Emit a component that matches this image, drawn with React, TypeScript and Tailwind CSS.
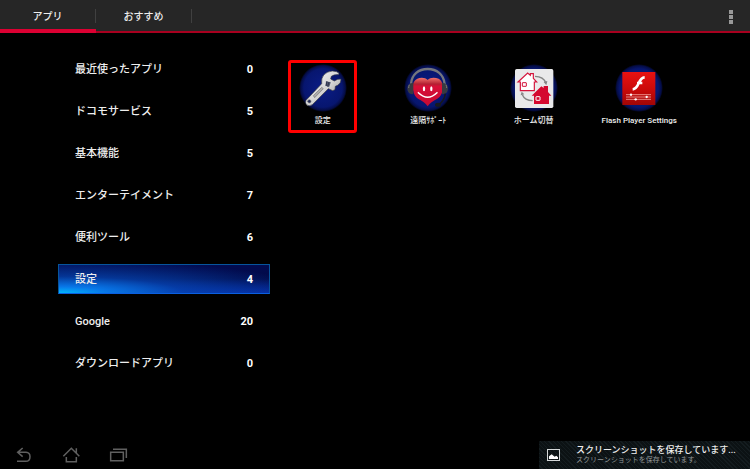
import { useState } from "react";

const categories = [
  { name: "最近使ったアプリ", count: 0 },
  { name: "ドコモサービス", count: 5 },
  { name: "基本機能", count: 5 },
  { name: "エンターテイメント", count: 7 },
  { name: "便利ツール", count: 6 },
  { name: "設定", count: 4 },
  { name: "Google", count: 20 },
  { name: "ダウンロードアプリ", count: 0 },
];

// blue disc behind every app icon
const Glow = ({ id, cx }: { id: string; cx: number }) => (
  <>
    <radialGradient id={id}>
      <stop offset="0" stopColor="#0a1c86" />
      <stop offset="0.8" stopColor="#07166f" />
      <stop offset="0.93" stopColor="#040c46" />
      <stop offset="1" stopColor="#000" />
    </radialGradient>
    <circle cx={cx} cy="99" r="72" fill={`url(#${id})`} />
  </>
);

const WrenchIcon = () => (
  <svg viewBox="54 27 144 144" className="size-12" aria-hidden="true">
    <Glow id="glow-wrench" cx={126} />
    <linearGradient id="steel" x1="0" y1="0" x2="1" y2="1">
      <stop offset="0" stopColor="#ffffff" />
      <stop offset="0.55" stopColor="#d2d2d2" />
      <stop offset="1" stopColor="#8c8c8c" />
    </linearGradient>
    <path
      d="M75 136 L122 86 Q120 70 128 60 Q138 49 154 48 Q168 48 174 55 L173 59 Q158 58 151 64 L149 72 L160 78 L170 73 L180 72 Q181 84 170 91 L163 94 L162 104 L155 107 L142 101 L94 149 Q84 156 76 149 Q71 143 75 136Z"
      fill="url(#steel)"
      stroke="#34363f"
      strokeWidth="2"
    />
    <path d="M134 77 l17 4 -6 17 -13 -5z" fill="#50566a" stroke="#eee" strokeWidth="2" />
    <path d="M138 79 l-3 14 M144 81 l-4 14" stroke="#1d2440" strokeWidth="2" />
    <path d="M97 122 L122 97 L127 101 L101 128Z" fill="#aaa" stroke="#777" strokeWidth="2" />
    <circle cx="85" cy="139" r="5" fill="#1b2454" stroke="#777" strokeWidth="2" />
  </svg>
);

const SupportIcon = () => (
  <svg viewBox="42 27 144 144" className="size-12" aria-hidden="true">
    <Glow id="glow-heart" cx={114} />
    <linearGradient id="heart" x1="0" y1="0" x2="0" y2="1">
      <stop offset="0" stopColor="#f0716b" />
      <stop offset="0.22" stopColor="#b32032" />
      <stop offset="0.3" stopColor="#d80f37" />
      <stop offset="1" stopColor="#c40a33" />
    </linearGradient>
    <path d="M63 87 C65 58 86 42 113 42 C140 42 161 58 164 87" fill="none" stroke="#74767d" strokeWidth="7" />
    <path
      d="M113 75 C106 67 92 67 82 71 C68 77 66 95 70 108 Q72 123 84 131 C95 137 107 144 113 154 C119 144 131 137 142 131 Q155 123 157 108 C161 95 158 77 146 71 C134 67 120 67 113 75Z"
      fill="url(#heart)"
    />
    <path d="M70 84 Q52 84 52 101 Q53 118 70 118Z" fill="#383a41" />
    <path d="M156 84 Q174 84 174 101 Q173 118 156 118Z" fill="#383a41" />
    <path d="M58 89 Q56 94 56 99 M168 89 Q170 94 170 99" stroke="#777" strokeWidth="3" fill="none" />
    <path d="M166 116 Q163 138 147 148" fill="none" stroke="#18191d" strokeWidth="5" />
    <ellipse cx="144" cy="149" rx="9" ry="6" fill="#191a1e" />
    <ellipse cx="102" cy="101" rx="3.5" ry="7.5" fill="#fff" />
    <ellipse cx="124" cy="101" rx="3.5" ry="7.5" fill="#fff" />
    <path d="M85 113 Q113 140 141 113" fill="none" stroke="#fff" strokeWidth="4.5" strokeLinecap="round" />
  </svg>
);

const HomeSwitchIcon = () => (
  <svg viewBox="42 27 144 144" className="size-12" aria-hidden="true">
    <Glow id="glow-home" cx={114} />
    <rect x="57" y="42" width="115" height="117" rx="5" fill="#e9e9ea" />
    <path d="M73 107 V81 H66 L95 54 L103 61 V56 H112 V70 L122 81 H115 V107Z" fill="#fff" stroke="#d4143c" strokeWidth="3.5" />
    <rect x="79" y="83" width="12" height="11" rx="1" fill="#fff" stroke="#d4143c" strokeWidth="3" />
    <path d="M114 147 V122 H107 L136 94 L143 99 V93 H156 V111 L166 122 H159 V147Z" fill="#d4082f" />
    <rect x="120" y="125" width="12" height="11" rx="1" fill="#d4082f" stroke="#fff" strokeWidth="3" />
    <path d="M117 64 Q143 65 149 83" fill="none" stroke="#858585" strokeWidth="4" />
    <path d="M143 81 L154 78 L151 91Z" fill="#858585" />
    <path d="M110 137 Q86 136 79 119" fill="none" stroke="#858585" strokeWidth="4" />
    <path d="M74 121 L77 110 L85 118Z" fill="#858585" />
  </svg>
);

const FlashIcon = () => (
  <svg viewBox="75 27 144 144" className="size-12" aria-hidden="true">
    <Glow id="glow-flash" cx={147} />
    <linearGradient id="flash" x1="0" y1="0" x2="0" y2="1">
      <stop offset="0" stopColor="#e81212" />
      <stop offset="0.5" stopColor="#cc0a0a" />
      <stop offset="1" stopColor="#a00606" />
    </linearGradient>
    <rect x="97" y="51" width="99" height="99" fill="url(#flash)" />
    <path d="M164 67 C143 68 149 102 128 103 M141 84 H157" fill="none" stroke="#fff" strokeWidth="8" />
    <path d="M108 119 H183 M108 126 H183 M108 133 H183" stroke="#f3a09b" strokeWidth="2.5" />
    <circle cx="123" cy="119" r="3.5" fill="#fff" />
    <circle cx="170" cy="126" r="3.5" fill="#fff" />
    <circle cx="137" cy="133" r="3.5" fill="#fff" />
  </svg>
);

const apps = [
  { name: "設定", icon: <WrenchIcon />, marked: true },
  { name: "遠隔ｻﾎﾟｰﾄ", icon: <SupportIcon /> },
  { name: "ホーム切替", icon: <HomeSwitchIcon /> },
  { name: "Flash Player Settings", icon: <FlashIcon /> },
];

const Header = () => {
  const [tab, setTab] = useState("アプリ");

  return (
    <header className="flex h-[33px] justify-between border-b-2 border-[#a8001f] bg-[#262626]">
      <nav className="flex">
        {["アプリ", "おすすめ"].map((name) => (
          <button
            key={name}
            className={`-mb-[2px] flex w-24 items-center border-b-4 pt-[3px] text-[10px] font-medium ${
              tab == name ? "border-[#dc0032]" : "border-transparent"
            }`}
            onClick={() => setTab(name)}
          >
            <span className="flex h-[14px] flex-1 items-center justify-center border-r border-[#404040]">
              {name}
            </span>
          </button>
        ))}
      </nav>
      <button aria-label="メニュー" className="flex w-[38px] flex-col items-center justify-center gap-px pt-[3px]">
        <i className="size-1 bg-[#989898]"></i>
        <i className="size-1 bg-[#989898]"></i>
        <i className="size-1 bg-[#989898]"></i>
      </button>
    </header>
  );
};

const Sidebar = () => {
  const [selected, setSelected] = useState("設定");

  return (
    <ul className="flex w-[270px] shrink-0 flex-col gap-3 pt-[21px] pl-[58px]">
      {categories.map(({ name, count }) => (
        <li key={name}>
          <button
            className={`flex h-[30px] w-full items-center justify-between border px-4 pt-[2px] text-[11px] ${
              selected == name
                ? "border-[#06549c] border-b-[#0a5fe0] bg-[radial-gradient(ellipse_at_bottom_left,#00b8ff_0%,#0877e8_16%,#0649b8b0_42%,transparent_85%),linear-gradient(to_bottom,#020b50_0%,#020a48_50%,#0528a0_100%)]"
                : "border-transparent"
            }`}
            onClick={() => setSelected(name)}
          >
            <span className="font-medium">{name}</span>
            <span className="font-bold text-white">{count}</span>
          </button>
        </li>
      ))}
    </ul>
  );
};

const Footer = () => (
  <footer className="flex h-7 items-center justify-between">
    <nav className="flex text-[#606060]">
      <button aria-label="戻る" className="flex w-[47px] justify-center">
        <svg viewBox="36 24 72 72" className="size-6" fill="none" stroke="currentColor" strokeWidth="4.5">
          <path d="M68 39 L53 52 L68 65 M53 52 H78 Q90 53 90 65 Q90 79 77 79 H51" />
        </svg>
      </button>
      <button aria-label="ホーム" className="flex w-[47px] justify-center">
        <svg viewBox="174 24 72 72" className="size-6" fill="none" stroke="currentColor" strokeWidth="4.5">
          <path d="M187 64 L211 40 L235 64 M226 54 V40 M196 66 V80 H226 V66" />
        </svg>
      </button>
      <button aria-label="最近使ったアプリ" className="flex w-[47px] justify-center">
        <svg viewBox="315 24 72 72" className="size-6" fill="none" stroke="currentColor" strokeWidth="4.5">
          <path d="M329 52 H367 V77 H329Z M336 43 H376 V69" />
        </svg>
      </button>
    </nav>
    <div className="flex h-7 w-[211px] items-center gap-4 bg-[repeating-linear-gradient(45deg,#0c1214_0px,#0c1214_2px,#141c1f_2px,#141c1f_3px)] pl-2">
      <svg viewBox="51 42 39 36" className="h-3 w-[13px] shrink-0" aria-hidden="true">
        <rect x="52.5" y="43.5" width="36" height="33" fill="none" stroke="#d5d8d9" strokeWidth="3" />
        <path d="M57 72 V64 L65 58 L74 65 L79 62 L84 67 V72Z" fill="#fff" />
      </svg>
      <div className="min-w-0 whitespace-nowrap">
        <p className="text-[9px] leading-[11px] font-medium">スクリーンショットを保存しています...</p>
        <p className="text-[7px] leading-[9px] text-[#929697]">スクリーンショットを保存しています。</p>
      </div>
    </div>
  </footer>
);

const App = () => {
  return (
    <div className="flex min-h-screen flex-col bg-black font-[Roboto,'Noto_Sans_CJK_JP',sans-serif] text-[#eee]">
      <Header />
      <main className="flex flex-1">
        <Sidebar />
        <div className="mr-[58px] grid flex-1 grid-cols-4 content-start pt-[27px]">
          {apps.map(({ name, icon, marked }) => (
            <button
              key={name}
              className={`flex h-[73px] w-[69px] flex-col items-center gap-[3px] justify-self-center rounded-[3px] border-3 pt-px ${
                marked ? "border-[#f00]" : "border-transparent"
              }`}
            >
              {icon}
              <span className="text-[8px] leading-[12px] font-medium whitespace-nowrap">{name}</span>
            </button>
          ))}
        </div>
      </main>
      <Footer />
    </div>
  );
};

export default App;
